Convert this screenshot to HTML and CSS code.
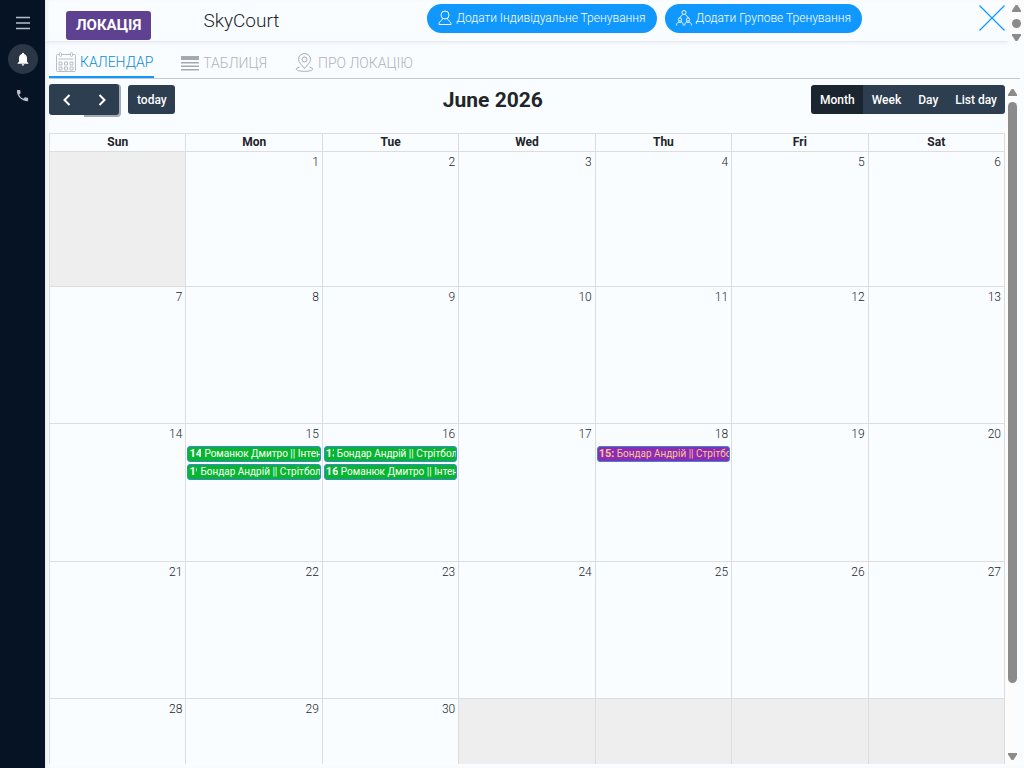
FILE: index.html
```html
<!DOCTYPE html>
<html lang="uk">
<head>
    <meta charset="UTF-8">
    <meta name="viewport" content="width=device-width, initial-scale=1.0">
    <title>SkyCourt</title>
    <link rel="stylesheet" href="styles.css">
</head>
<body>
    <nav class="sidebar">
        <button type="button" class="side-btn" aria-label="Menu">
            <svg width="16" height="14" viewBox="0 0 16 14" stroke="#b9bec6" stroke-width="1.3"><path d="M1 1.5h14M1 7h14M1 12.5h14"/></svg>
        </button>
        <button type="button" class="side-btn round" aria-label="Notifications">
            <svg width="16" height="16" viewBox="0 0 24 24" fill="#fff"><path d="M12 22c1.1 0 2-.9 2-2h-4c0 1.100.9 2 2 2zm6-6v-5c0-3.070-1.630-5.640-4.500-6.320V4c0-.83-.67-1.500-1.500-1.500s-1.500.67-1.500 1.500v.68C7.640 5.360 6 7.920 6 11v5l-2 2v1h16v-1l-2-2z"/></svg>
        </button>
        <button type="button" class="side-btn" aria-label="Phone">
            <svg width="15" height="15" viewBox="0 0 24 24" fill="#b9bec6"><path d="M6.620 10.790c1.440 2.830 3.760 5.140 6.590 6.590l2.200-2.200c.27-.27.67-.36 1.020-.24 1.120.37 2.330.57 3.570.57.55 0 1 .45 1 1V20c0 .55-.45 1-1 1-9.390 0-17-7.610-17-17 0-.55.45-1 1-1h3.500c.55 0 1 .45 1 1 0 1.250.2 2.450.57 3.570.11.35.03.74-.25 1.020l-2.200 2.200z"/></svg>
        </button>
    </nav>

    <main class="page">
        <header class="topbar">
            <div class="topbar-content">
                <span class="badge">ЛОКАЦІЯ</span>
                <h1 class="location-name">SkyCourt</h1>
                <div class="actions">
                    <button type="button" class="pill">
                        <svg width="14" height="16" viewBox="0 0 14 16" fill="none" stroke="#fff"><circle cx="7" cy="5" r="4"/><path d="M4.500 8.500C4.500 11 1 10.500 1 14.500h12c0-4-3.500-3.500-3.500-6"/></svg>
                        Додати Індивідуальне Тренування
                    </button>
                    <button type="button" class="pill">
                        <svg width="16" height="16" viewBox="0 0 16 16" fill="none" stroke="#fff" stroke-width=".9"><circle cx="8" cy="2.500" r="2"/><path d="M6.500 4.500 3.500 8M9.500 4.500l3 3.500"/><circle cx="4" cy="9.500" r="1.600"/><circle cx="12" cy="9.500" r="1.600"/><path d="M.5 15.500c0-2 1-3 2.500-4l1 1.500 1-1.500c1.500 1 2.300 2 2.300 4M8.700 15.500c0-2 .8-3 2.300-4l1 1.500 1-1.500c1.500 1 2.500 2 2.500 4"/></svg>
                        Додати Групове Тренування
                    </button>
                </div>
                <button type="button" class="close" aria-label="Close">
                    <svg width="26" height="26" viewBox="0 0 26 26" stroke="#1098ff" stroke-width="1.200"><path d="M.5.5l25 25M25.500.5l-25 25"/></svg>
                </button>
            </div>
            <div class="scrollbar">
                <span class="arrow up"></span>
                <span class="thumb dot"></span>
                <span class="arrow down"></span>
            </div>
        </header>

        <div class="tabs">
            <a href="#" class="tab active">
                <svg width="20" height="20" viewBox="0 0 20 20" fill="none" stroke="#b4b7bb" stroke-width=".9"><path d="M3 2.500H1.500q-1 0-1 1v15q0 1 1 1h17q1 0 1-1v-15q0-1-1-1H17M6 2.500h8M2.500 7h15"/><rect x="3.500" y=".5" width="2" height="4" rx="1"/><rect x="14.500" y=".5" width="2" height="4" rx="1"/><path d="M3 10h3v3H3zM8.500 10h3v3h-3zM14 10h3v3h-3zM3 15h3v3H3zM8.500 15h3v3h-3zM14 15h3v3h-3z"/></svg>
                КАЛЕНДАР
            </a>
            <a href="#" class="tab">
                <svg width="18" height="16" viewBox="0 0 18 16" fill="#a6a9ae"><path d="M0 1h18v4H0zM0 7h18v1.500H0zM0 10.500h18V12H0zM0 14h18v1.500H0z"/></svg>
                ТАБЛИЦЯ
            </a>
            <a href="#" class="tab">
                <svg width="19" height="19" viewBox="0 0 19 19" fill="none" stroke="#a6a9ae"><path d="M9.500 15.500C7 12 3.500 9.500 3.500 6.500a6 6 0 0 1 12 0c0 3-3.500 5.500-6 9z"/><circle cx="9.500" cy="6.500" r="2.500"/><path d="M4.500 14.200C-1 15.500.5 18.300 9.500 18.300s10.500-2.800 5-4.100"/></svg>
                ПРО ЛОКАЦІЮ
            </a>
        </div>

        <section class="calendar-area">
            <div class="calendar">
                <div class="toolbar">
                    <div class="toolbar-left">
                        <div class="btn-group">
                            <button type="button" class="btn arrow-btn" aria-label="prev"><svg width="8" height="12" viewBox="0 0 8 12" fill="none" stroke="#fff" stroke-width="2"><path d="M6.500 1 1.500 6l5 5"/></svg></button>
                            <button type="button" class="btn arrow-btn focused" aria-label="next"><svg width="8" height="12" viewBox="0 0 8 12" fill="none" stroke="#fff" stroke-width="2"><path d="M1.500 1l5 5-5 5"/></svg></button>
                        </div>
                        <button type="button" class="btn">today</button>
                    </div>
                    <h2>June 2026</h2>
                    <div class="btn-group">
                        <button type="button" class="btn pressed">Month</button>
                        <button type="button" class="btn">Week</button>
                        <button type="button" class="btn">Day</button>
                        <button type="button" class="btn">List day</button>
                    </div>
                </div>

                <table class="month">
                    <thead>
                        <tr><th>Sun</th><th>Mon</th><th>Tue</th><th>Wed</th><th>Thu</th><th>Fri</th><th>Sat</th></tr>
                    </thead>
                    <tbody>
                        <tr class="first-week"><td class="off"></td><td>1</td><td>2</td><td>3</td><td>4</td><td>5</td><td>6</td></tr>
                        <tr><td>7</td><td>8</td><td>9</td><td>10</td><td>11</td><td>12</td><td>13</td></tr>
                        <tr class="busy-week">
                            <td>14</td>
                            <td>15
                                <div class="events">
                                    <a href="#" class="event"><b class="time">14</b><span>Романюк Дмитро || Інтенсив</span></a>
                                    <a href="#" class="event"><b class="time short">19</b><span>Бондар Андрій || Стрітбол</span></a>
                                </div>
                            </td>
                            <td>16
                                <div class="events">
                                    <a href="#" class="event"><b class="time short">13</b><span>Бондар Андрій || Стрітбол</span></a>
                                    <a href="#" class="event"><b class="time">16</b><span>Романюк Дмитро || Інтенсив</span></a>
                                </div>
                            </td>
                            <td>17</td>
                            <td>18
                                <div class="events">
                                    <a href="#" class="event purple"><b class="time long">15:00</b><span>Бондар Андрій || Стрітбол</span></a>
                                </div>
                            </td>
                            <td>19</td>
                            <td>20</td>
                        </tr>
                        <tr><td>21</td><td>22</td><td>23</td><td>24</td><td>25</td><td>26</td><td>27</td></tr>
                        <tr><td>28</td><td>29</td><td>30</td><td class="off"></td><td class="off"></td><td class="off"></td><td class="off"></td></tr>
                    </tbody>
                </table>
            </div>
            <div class="scrollbar tall">
                <span class="arrow up"></span>
                <span class="track"><span class="thumb"></span></span>
                <span class="arrow down"></span>
            </div>
        </section>
    </main>
</body>
</html>
```
FILE: styles.css
```css
* {
    box-sizing: border-box;
}
body {
    margin: 0;
    height: 100vh;
    display: flex;
    overflow: hidden;
    background: #fafdff;
    color: #212529;
    font-family: Roboto, sans-serif;
    font-size: 12px;
    font-weight: 300;
}
button {
    font-family: inherit;
    border: none;
    cursor: pointer;
}
a {
    text-decoration: none;
}
svg {
    flex: none;
}

/* sidebar */
.sidebar {
    width: 45px;
    flex: none;
    background: #061325;
    display: flex;
    flex-direction: column;
    align-items: center;
    gap: 6px;
    padding-top: 8px;
}
.side-btn {
    width: 30px;
    height: 30px;
    padding: 0;
    border-radius: 50%;
    background: none;
    display: flex;
    align-items: center;
    justify-content: center;
}
.round {
    background: #2b3646;
}

/* header */
.page {
    flex: 1;
    min-width: 0;
    display: flex;
    flex-direction: column;
    box-shadow: inset 4px 0 4px -2px #e6eaf2;
}
.topbar {
    display: flex;
    height: 41px;
    flex: none;
}
.topbar-content {
    flex: 1;
    display: flex;
    align-items: flex-start;
    padding: 0 4px 0 21px;
    box-shadow: 0 1px 4px #dde0ec;
    clip-path: inset(0 0 -6px 0);
}
.badge {
    margin-top: 11px;
    padding: 0 10px;
    line-height: 29px;
    border-radius: 3px;
    background: #5e4190;
    color: #fff;
    font-size: 15px;
    font-weight: 700;
}
.location-name {
    margin: 9px 0 0 52px;
    font-size: 19px;
    line-height: 24px;
    font-weight: 300;
}
.actions {
    margin: 4px 117px 0 auto;
    display: flex;
    gap: 8px;
}
.pill {
    display: flex;
    align-items: center;
    gap: 4px;
    height: 29px;
    padding: 0 11px 2px;
    border-radius: 15px;
    background: #1098ff;
    color: #fff;
    font-size: 12px;
    font-weight: 300;
    white-space: nowrap;
}
.close {
    margin-top: 5px;
    padding: 0;
    background: none;
}
.close svg {
    display: block;
}

/* scrollbars */
.scrollbar {
    width: 15px;
    flex: none;
    display: flex;
    flex-direction: column;
    align-items: center;
    justify-content: space-between;
    padding: 5px 0 0;
    background: #fcfcfc;
}
.arrow {
    width: 9px;
    height: 7px;
    background: #8b8b8b;
}
.up {
    clip-path: polygon(40% 0, 60% 0, 100% 80%, 100% 100%, 0 100%, 0 80%);
}
.down {
    clip-path: polygon(0 0, 100% 0, 100% 20%, 60% 100%, 40% 100%, 0 20%);
}
.thumb {
    display: block;
    width: 9px;
    border-radius: 5px;
    background: #8b8b8b;
}
.dot {
    height: 9px;
}
.tall {
    margin-right: 4px;
    padding: 5px 0 4px;
}
.track {
    flex: 1;
    padding: 6px 0;
}
.track .thumb {
    height: 90%;
}

/* tabs */
.tabs {
    display: flex;
    gap: 20px;
    flex: none;
    height: 38px;
    margin: 0 4px;
    padding-top: 6px;
    border-bottom: 1px solid #c6c9cc;
}
.tab {
    display: flex;
    align-items: center;
    gap: 4px;
    height: 31px;
    padding: 0 1px 0 7px;
    color: #b0b3b8;
    font-size: 14px;
}
.active {
    color: #0d8ad6;
    border-bottom: 2px solid #1098ff;
}

/* calendar */
.calendar-area {
    flex: 1;
    min-height: 0;
    display: flex;
    margin: 5px 0 4px 4px;
}
.calendar {
    flex: 1;
    min-width: 0;
    overflow: hidden;
}
.toolbar {
    display: flex;
    align-items: center;
    justify-content: space-between;
    height: 31px;
    margin-bottom: 18px;
}
.toolbar-left {
    display: flex;
    align-items: center;
    gap: 9px;
}
h2 {
    margin: 0;
    font-size: 21px;
    font-weight: 700;
}
.btn-group {
    display: flex;
}
.btn {
    height: 29px;
    padding: 0 8px 0 9px;
    border-radius: 3px;
    background: #2c3e50;
    color: #fff;
    font-size: 12px;
    font-weight: 500;
}
.btn-group .btn {
    border-radius: 0;
}
.btn-group .btn:first-child {
    border-radius: 3px 0 0 3px;
}
.btn-group .btn:last-child {
    border-radius: 0 3px 3px 0;
}
.pressed {
    background: #1a252f;
}
.arrow-btn {
    width: 35px;
    height: 31px;
    display: flex;
    align-items: center;
    justify-content: center;
}
.focused {
    box-shadow: 1px 1px 0 1px #a2abb4;
}
.month {
    width: 100%;
    table-layout: fixed;
    border-collapse: collapse;
}
th, td {
    border: 1px solid #ddd;
}
th {
    height: 18px;
    padding: 0 0 1px;
    line-height: 15px;
    font-weight: 700;
}
td {
    height: 137px;
    padding: 3px 3px 0 1px;
    vertical-align: top;
    text-align: right;
    line-height: 15px;
}
.first-week td {
    height: 135px;
}
.busy-week td {
    height: 138px;
}
.off {
    background: #edeeed;
}
.events {
    display: flex;
    flex-direction: column;
    gap: 2px;
    margin: 4px -2px 0 0;
}
.event {
    display: flex;
    gap: 3px;
    height: 16px;
    padding-left: 1px;
    border: 1px solid #3788d8;
    border-radius: 3px;
    background: #08b52f;
    color: #fff;
    font-size: 10px;
    line-height: 14px;
    font-weight: 400;
    white-space: nowrap;
    overflow: hidden;
    text-align: left;
}
.time {
    flex: none;
    width: 12px;
    overflow: hidden;
    font-size: 11px;
    font-weight: 700;
}
.short {
    width: 8px;
}
.long {
    width: 15px;
}
.purple {
    background: #8e2bb5;
    color: #f5c98b;
}
```
